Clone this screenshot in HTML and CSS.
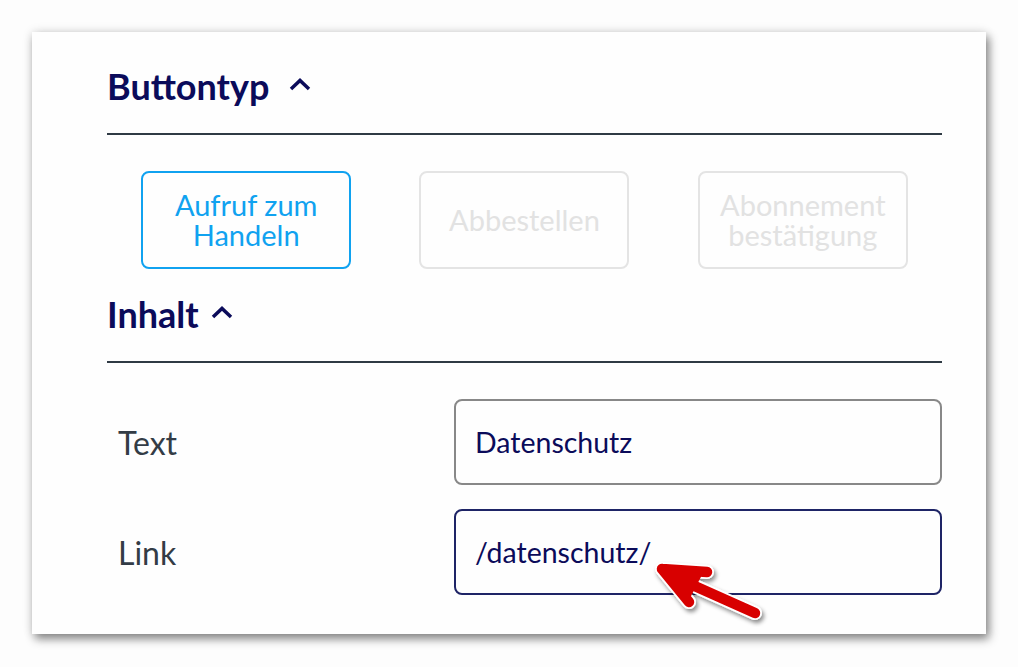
FILE: index.html
```html
<!DOCTYPE html>
<html lang="de">
<head>
    <meta charset="UTF-8">
    <meta name="viewport" content="width=device-width, initial-scale=1.0">
    <title>Button bearbeiten</title>
    <link rel="stylesheet" href="styles.css">
</head>
<body>
    <div class="panel">
        <div class="section-head">
            <h2>Buttontyp</h2>
            <svg class="chevron" width="22" height="13" viewBox="0 0 22 13"><polyline points="2,11 11,2.5 20,11" /></svg>
        </div>
        <div class="btn-types">
            <button class="type-btn active">Aufruf zum<br>Handeln</button>
            <button class="type-btn">Abbestellen</button>
            <button class="type-btn">Abonnement<br>bestätigung</button>
        </div>

        <div class="section-head second">
            <h2>Inhalt</h2>
            <svg class="chevron" width="22" height="13" viewBox="0 0 22 13"><polyline points="2,11 11,2.5 20,11" /></svg>
        </div>
        <div class="form-rows">
            <div class="form-row">
                <label for="btnText">Text</label>
                <input type="text" id="btnText" value="Datenschutz">
            </div>
            <div class="form-row">
                <label for="btnLink">Link</label>
                <input type="text" id="btnLink" class="focused" value="/datenschutz/">
            </div>
        </div>

        <!-- annotation arrow -->
        <svg class="arrow" width="160" height="110" viewBox="0 0 160 110">
            <defs>
                <filter id="shadow" x="-20%" y="-20%" width="150%" height="150%">
                    <feDropShadow dx="2" dy="3" stdDeviation="2" flood-color="#000" flood-opacity="0.45"/>
                </filter>
            </defs>
            <g filter="url(#shadow)" fill="none" stroke-linecap="round" stroke-linejoin="round">
                <g stroke="#fff" stroke-width="14">
                    <path d="M22 19 L67 22 M22 19 L49 52 M30 25 L115 63"/>
                </g>
                <g stroke="#d80000" stroke-width="10.5">
                    <path d="M22 19 L67 22 M22 19 L49 52 M30 25 L115 63"/>
                </g>
                <polygon points="24,20 63,23 50,48" fill="#d80000" stroke="none"/>
            </g>
        </svg>
    </div>
</body>
</html>
```

FILE: styles.css
```css
body, html {
    margin: 0;
    padding: 0;
    background: #fdfdfd;
    font-family: Lato, "Open Sans", sans-serif;
}

body {
    padding: 32px;
}

.panel {
    position: relative;
    width: 954px;
    box-sizing: border-box;
    padding: 33px 44px 39px 75px;
    background: #fefefe;
    box-shadow: 3px 5px 9px rgba(0, 0, 0, 0.45), 0 0 10px rgba(0, 0, 0, 0.12);
}

.section-head {
    display: flex;
    align-items: center;
    gap: 20px;
    padding-bottom: 26px;
    border-bottom: 2px solid #2f3a44;
}

.section-head.second {
    margin-top: 24px;
    gap: 12px;
}

.section-head h2 {
    margin: 0;
    font-size: 36px;
    line-height: 42px;
    font-weight: 700;
    color: #0b0b5a;
}

.chevron {
    margin-top: -4px;
}

.chevron polyline {
    fill: none;
    stroke: #0b0b5a;
    stroke-width: 3.5;
}

.btn-types {
    display: flex;
    justify-content: space-around;
    margin-top: 36px;
}

.type-btn {
    width: 210px;
    height: 98px;
    padding: 0;
    background: #fefefe;
    border: 2px solid #e4e4e4;
    border-radius: 8px;
    font-family: Lato, "Open Sans", sans-serif;
    font-size: 29px;
    line-height: 30px;
    color: #e2e2e2;
    cursor: pointer;
}

.type-btn.active {
    border-color: #10a2f0;
    color: #10a2f0;
}

.form-rows {
    display: flex;
    flex-direction: column;
    gap: 24px;
    margin-top: 36px;
}

.form-row {
    display: flex;
    align-items: center;
}

.form-row label {
    width: 347px;
    padding-left: 11px;
    box-sizing: border-box;
    font-size: 32px;
    color: #333c46;
}

.form-row input {
    width: 488px;
    height: 86px;
    box-sizing: border-box;
    padding: 0 19px;
    border: 2px solid #888;
    border-radius: 8px;
    background: #fefefe;
    font-family: Lato, "Open Sans", sans-serif;
    font-size: 28.5px;
    color: #0b0b5a;
    outline: none;
}

.form-row input.focused {
    border-color: #1e2466;
}

.arrow {
    position: absolute;
    left: 608px;
    top: 518px;
}
```
